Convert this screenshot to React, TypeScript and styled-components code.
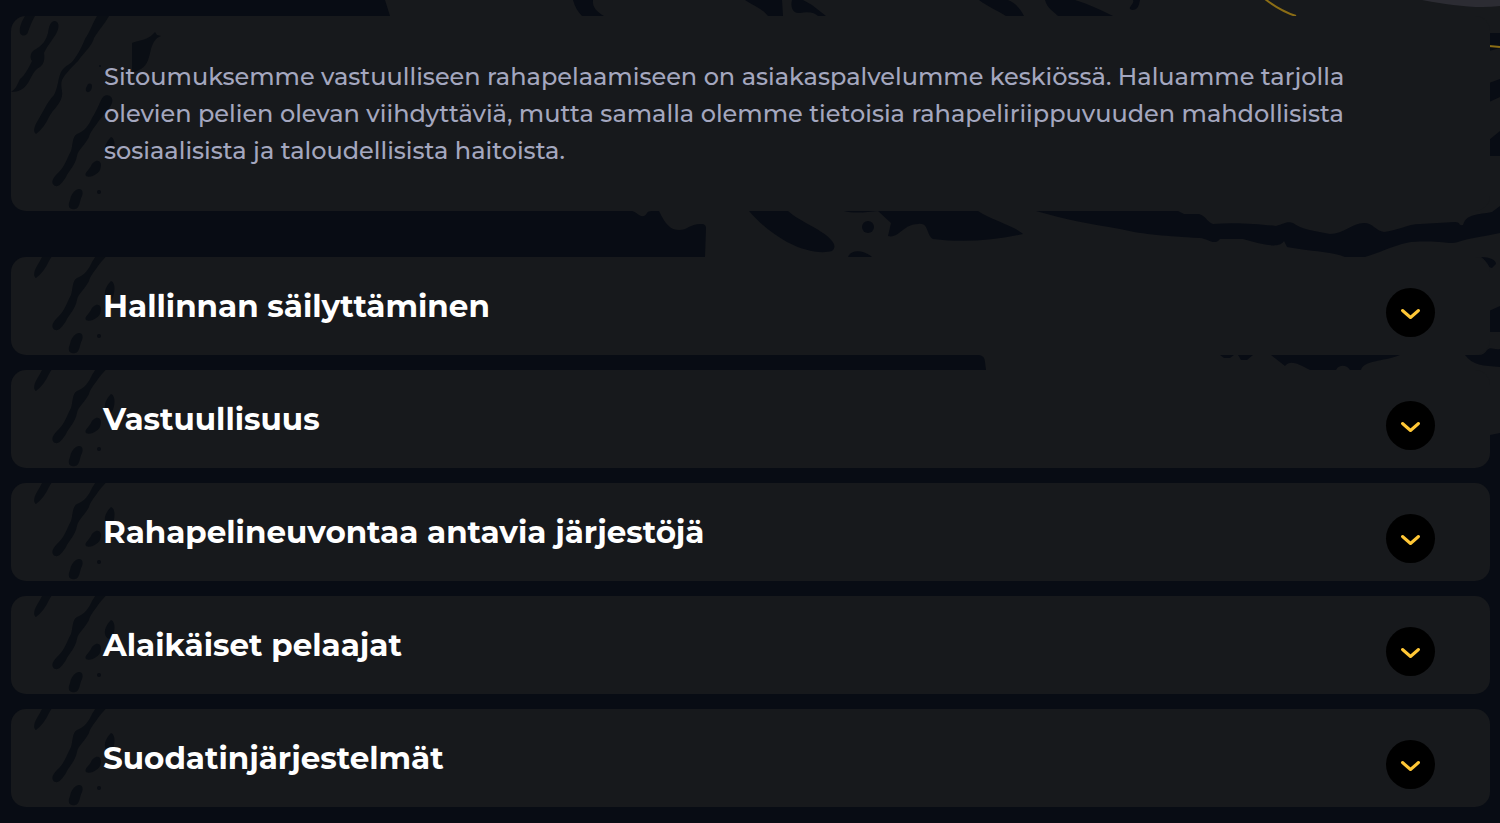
import React, { useState } from "react";
import styled, { createGlobalStyle } from "styled-components";

const colors = {
  page: "#080c14",
  card: "#17191c",
  stroke: "#0a0e14",
  body: "#a4a7bf",
  title: "#ffffff",
  accent: "#ffc736",
};

const GlobalStyle = createGlobalStyle`
  *, *::before, *::after { box-sizing: border-box; }
  body {
    margin: 0;
    background: ${colors.page};
    font-family: Montserrat, Inter, "Liberation Sans", sans-serif;
  }
`;

const Page = styled.main`
  position: relative;
  min-height: 100vh;
  padding: 16px 10px 16px 11px;
  overflow: hidden;
`;

const Backdrop = styled.svg`
  position: absolute;
  inset: 0;
  width: 100%;
  height: 100%;
`;

const Content = styled.div`
  position: relative;
  display: flex;
  flex-direction: column;
  gap: 46px;
`;

const Card = styled.section`
  position: relative;
  overflow: hidden;
  border-radius: 15px;
  background: ${colors.card};
`;

const Texture = styled.svg`
  position: absolute;
  left: 0;
  bottom: 0;
  width: 160px;
  height: 195px;
  pointer-events: none;
`;

const Intro = styled.p`
  position: relative;
  margin: 0;
  padding: 42px 93px;
  color: ${colors.body};
  font-size: 24px;
  font-weight: 500;
  line-height: 37px;
`;

const Accordion = styled.div`
  display: flex;
  flex-direction: column;
  gap: 15px;
`;

const Heading = styled.h2`
  position: relative;
  margin: 0;
`;

const Toggle = styled.button`
  display: flex;
  align-items: flex-start;
  justify-content: space-between;
  width: 100%;
  padding: 31px 55px 18px 92px;
  border: 0;
  background: none;
  color: ${colors.title};
  font: inherit;
  text-align: left;
  cursor: pointer;
`;

const Title = styled.span`
  font-size: 31px;
  font-weight: 700;
  line-height: 36px;
`;

const Disc = styled.span<{ $open: boolean }>`
  display: grid;
  place-items: center;
  flex: none;
  width: 49px;
  height: 49px;
  border-radius: 50%;
  background: #000;
  transform: ${(p) => (p.$open ? "rotate(180deg)" : "none")};
`;

function Strokes() {
  return (
    <Texture viewBox="11 16 160 195" fill={colors.stroke} aria-hidden="true">
      <path d="M25 16 L35 16 C32 21 30 26 28 32 C27 36 22 37 20 33 C19 27 22 21 25 16Z" />
      <path d="M55 21 C60 22 59 29 56 34 C51 42 47 46 44 53 C45 59 44 64 40 67 C34 70 32 76 28 83 C24 89 19 92 11 92 C16 89 17 85 20 79 C25 75 28 69 32 61 C29 57 31 51 36 49 C43 45 46 40 48 33 C49 27 50 21 55 21Z" />
      <path d="M97 16 L109 16 C104 25 98 31 94 38 C92 46 84 52 78 61 C72 67 65 74 62 80 C60 86 63 91 62 96 C60 105 53 109 49 117 C46 124 41 130 36 134 C33 132 34 127 37 122 C43 112 46 104 54 95 C58 88 58 78 61 72 C65 65 71 65 75 58 C80 51 82 46 85 39 C90 32 92 24 97 16Z" />
      <path d="M132 43 C139 40 148 40 153 34 L155 32 L157 35 L161 36 C155 38 153 43 151 49 C149 57 148 65 141 69 L132 73Z" />
      <circle cx="100" cy="66" r="1" />
      <path d="M88 84 C92 82 93 86 91 90 C88 94 85 92 86 88Z" />
      <path d="M103 97 C107 93 114 96 112 103 C109 111 102 116 98 122 C94 128 90 132 89 137 C84 146 78 150 77 156 C75 166 69 170 66 177 C62 183 59 187 55 186 C50 183 53 178 57 174 C65 167 66 160 71 151 C73 145 72 137 77 134 C85 131 89 125 92 118 C97 111 99 103 103 97Z" />
      <path d="M111 137 C116 139 115 149 112 155 C108 158 104 153 105 147 C106 143 108 140 111 137Z" />
      <path d="M96 161 C101 160 102 165 100 170 C97 175 90 178 86 176 C84 173 89 170 91 166 C92 163 94 162 96 161Z" />
      <path d="M76 190 C81 187 84 191 82 196 C79 202 80 208 75 209 C70 210 67 207 70 200 C71 195 73 192 76 190Z" />
      <circle cx="99" cy="192" r="2" />
    </Texture>
  );
}

function BackdropArt() {
  return (
    <Backdrop viewBox="0 0 1500 823" preserveAspectRatio="xMaxYMin slice" aria-hidden="true">
      <path
        fill={colors.card}
        d="M385 0 L390 16 L560 120 L632 211 C637 212 639 217 644 216 C648 214 646 211 652 211 L659 211 C663 219 668 230 679 230 C688 230 690 223 703 224 Q706 225 706 228 L705 257 L800 310 L960 355 L979 355 Q985 356 985 362 L986 370 L1000 420 L1460 450 L1490 435 L1500 433 V0Z"
      />
      <g fill={colors.page}>
        <path d="M573 0 C575 7 578 12 582 16 H604 C597 12 592 7 593 0Z" />
        <path d="M745 0 C754 6 763 9 768 16 H783 L782 0Z" />
        <path d="M792 0 C790 7 793 14 800 13 C809 11 815 13 818 16 H826 L812 5 L803 0Z" />
        <path d="M979 0 C988 7 997 10 1006 16 H1024 C1020 9 1017 4 1008 0Z" />
        <path d="M1045 0 C1047 8 1053 11 1058 16 H1113 C1101 10 1088 4 1075 0Z" />
        <path d="M1133 0 C1135 4 1126 8 1132 10 C1138 10 1139 5 1140 0Z" />
        <path d="M1489 33 H1500 V48 L1489 51Z" />
        <path d="M1489 83 L1500 79 V97 L1489 102Z" />
        <path d="M1489 140 L1500 131 V156 H1489Z" />
        <path d="M749 211 C760 224 773 234 787 242 C804 251 821 254 832 251 Q837 247 832 241 C824 230 800 222 788 211Z" />
        <path d="M844 211 H878 C867 212 855 214 844 211Z" />
        <circle cx="868" cy="227" r="6" />
        <path d="M848 257 C851 249 864 250 872 257Z" />
        <path d="M878 211 L891 223 L888 236 C899 239 903 224 918 224 C929 222 926 235 933 239 C965 243 995 240 1023 234 C1015 226 991 220 978 211Z" />
        <path d="M1036 211 H1178 L1184 214 H1199 C1206 216 1208 223 1213 224 C1234 222 1259 224 1276 226 C1284 224 1287 221 1293 223 C1302 230 1316 231 1330 234 C1344 234 1352 223 1364 223 C1373 223 1376 231 1384 232 C1396 231 1408 224 1420 224 L1455 222 C1461 222 1458 226 1463 225 C1467 213 1478 215 1492 212 L1500 206 V233 C1483 237 1468 238 1458 242 C1447 245 1446 240 1411 242 C1397 244 1382 252 1365 257 H1345 C1333 252 1309 251 1287 247 L1284 241 C1279 250 1258 243 1243 239 H1220 C1214 246 1209 239 1200 238 C1166 236 1146 235 1120 229 C1090 224 1063 219 1036 211Z" />
        <path d="M1481 257 C1490 257 1496 260 1496 264 L1492 268 C1487 267 1487 261 1481 257Z" />
        <path d="M1489 311 L1500 306 V332 H1489Z" />
        <path d="M1220 355 H1234 L1230 358 H1224Z M1238 355 H1253 L1247 360 H1241Z" />
        <path d="M1271 355 L1285 366 C1290 360 1297 363 1310 370 H1336 C1339 364 1347 365 1350 370 H1361 C1364 360 1382 362 1400 355Z" />
        <path d="M1465 355 C1472 365 1484 366 1500 367 V349 C1493 350 1491 346 1487 350 Q1484 355 1479 355Z" />
      </g>
      <path d="M1422 0 C1450 5 1476 9 1500 6 V0Z" fill="#2c2c33" />
      <path d="M1265 -1 C1274 6 1284 12 1296 16 M1489 46 L1500 47" fill="none" stroke="#8b6d15" strokeWidth="2" />
    </Backdrop>
  );
}

function AccordionItem({ title }: { title: string }) {
  const [open, setOpen] = useState(false);
  return (
    <Card>
      <Strokes />
      <Heading>
        <Toggle type="button" aria-expanded={open} onClick={() => setOpen(!open)}>
          <Title>{title}</Title>
          <Disc $open={open}>
            <svg width="49" height="49" viewBox="0 0 49 49" fill="none" aria-hidden="true">
              <path
                d="M16.5 22.5 L24.5 29.5 L32.5 22.5"
                stroke={colors.accent}
                strokeWidth="3"
                strokeLinecap="round"
                strokeLinejoin="round"
              />
            </svg>
          </Disc>
        </Toggle>
      </Heading>
    </Card>
  );
}

const topics = [
  "Hallinnan säilyttäminen",
  "Vastuullisuus",
  "Rahapelineuvontaa antavia järjestöjä",
  "Alaikäiset pelaajat",
  "Suodatinjärjestelmät",
];

export default function App() {
  return (
    <Page>
      <GlobalStyle />
      <BackdropArt />
      <Content>
        <Card>
          <Strokes />
          <Intro>
            Sitoumuksemme vastuulliseen rahapelaamiseen on asiakaspalvelumme keskiössä. Haluamme
            tarjolla olevien pelien olevan viihdyttäviä, mutta samalla olemme tietoisia
            rahapeliriippuvuuden mahdollisista sosiaalisista ja taloudellisista haitoista.
          </Intro>
        </Card>
        <Accordion>
          {topics.map((title) => (
            <AccordionItem key={title} title={title} />
          ))}
        </Accordion>
      </Content>
    </Page>
  );
}
